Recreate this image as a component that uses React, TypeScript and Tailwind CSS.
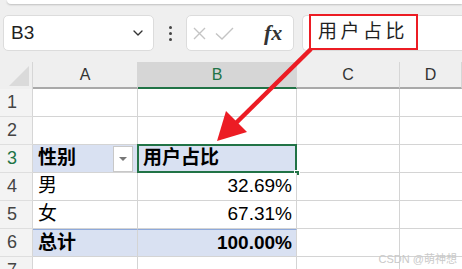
import React from "react";
import { ChevronDown } from "lucide-react";

const FONT = '"Liberation Sans", "Noto Sans CJK SC", sans-serif';

const cols = [
  { key: "A", w: "w-[105px]" },
  { key: "B", w: "w-[159px]" },
  { key: "C", w: "w-[103px]" },
  { key: "D", w: "flex-1" },
];

type Row = {
  n: number;
  a?: string;
  b?: string;
  kind?: "head" | "total";
};

const rows: Row[] = [
  { n: 1 },
  { n: 2 },
  { n: 3, a: "性别", b: "用户占比", kind: "head" },
  { n: 4, a: "男", b: "32.69%" },
  { n: 5, a: "女", b: "67.31%" },
  { n: 6, a: "总计", b: "100.00%", kind: "total" },
  { n: 7 },
];

function Toolbar() {
  return (
    <div className="flex items-center h-[36px] mt-[11px] pl-[3px]">
      {/* name box */}
      <div className="flex items-center justify-between w-[151px] h-full bg-white border border-[#dcdcdc] rounded-[5px] pl-[7px] pr-[7px]">
        <span className="text-[19px] text-[#1f1f1f]">B3</span>
        <ChevronDown className="w-[16px] h-[16px] text-[#333]" strokeWidth={2} />
      </div>

      {/* kebab */}
      <div className="flex flex-col items-center justify-center gap-[3px] w-[32px]">
        <span className="w-[3px] h-[3px] bg-[#444] rounded-full" />
        <span className="w-[3px] h-[3px] bg-[#444] rounded-full" />
        <span className="w-[3px] h-[3px] bg-[#444] rounded-full" />
      </div>

      {/* cancel / enter / fx */}
      <div className="flex items-center w-[108px] h-full bg-white border border-[#dcdcdc] rounded-[5px] pl-[6px] gap-[9px]">
        <svg width="13" height="13" viewBox="0 0 13 13" fill="none" stroke="#c4c4c4" strokeWidth="1.4">
          <path d="M1 1 L12 12 M12 1 L1 12" />
        </svg>
        <svg width="19" height="13" viewBox="0 0 19 13" fill="none" stroke="#c4c4c4" strokeWidth="1.4">
          <path d="M1 6.5 L7 12 L18 1" />
        </svg>
        <span
          className="ml-[21px] text-[22px] italic font-bold text-[#333] leading-none"
          style={{ fontFamily: '"Liberation Serif", serif' }}
        >
          fx
        </span>
      </div>

      {/* formula input */}
      <div className="flex-1 ml-[8px] h-full bg-white border border-[#dcdcdc] rounded-l-[5px] border-r-0 relative">
        <div className="absolute left-[6px] top-[-2px] w-[109px] h-[36px] border-[2.5px] border-[#ec1c24] flex items-center pl-[7px]">
          <span className="text-[19px] text-[#1f1f1f] tracking-[3.5px]">用户占比</span>
        </div>
      </div>
    </div>
  );
}

function Grid() {
  return (
    <div className="mt-[11px] bg-white">
      {/* column header */}
      <div className="flex h-[27px] bg-[#efefef]">
        <div className="w-[33px] border-r border-[#d6d6d6] relative">
          <div className="absolute right-[3px] bottom-[3px] w-0 h-0 border-l-[20px] border-l-transparent border-b-[20px] border-b-[#dadada]" />
        </div>
        {cols.map((c) => (
          <div
            key={c.key}
            className={`${c.w} flex items-center justify-center text-[16px] border-r border-[#d6d6d6] ${
              c.key === "B"
                ? "bg-[#d6d6d6] text-[#217346] border-b-2 border-b-[#217346]"
                : "text-[#333] border-b-2 border-b-[#a9a9a9]"
            }`}
          >
            {c.key}
          </div>
        ))}
      </div>

      {rows.map((r) => {
        const fill = r.kind ? "bg-[#d9e1f2]" : "bg-white";
        const top = r.kind === "total" ? "border-t border-t-[#8ea9db]" : "";
        const weight = r.kind ? "font-bold" : "font-normal";
        return (
          <div key={r.n} className="flex h-[28px]">
            <div
              className={`w-[33px] flex items-center pl-[7px] text-[18px] bg-[#f3f3f3] border-r border-[#d6d6d6] border-b border-b-[#dedede] ${
                r.n === 3 ? "text-[#217346]" : "text-[#444]"
              }`}
            >
              {r.n}
            </div>
            <div
              className={`w-[105px] flex items-center justify-between pl-[5px] text-[19px] text-black border-r border-b border-[#d4d4d4] ${fill} ${top} ${weight}`}
            >
              <span>{r.a}</span>
              {r.kind === "head" && (
                <div className="w-[20px] h-[26px] mr-[4px] bg-white border border-[#c8c8c8] flex items-center justify-center">
                  <div className="w-0 h-0 border-l-[4px] border-r-[4px] border-t-[4px] border-l-transparent border-r-transparent border-t-[#777]" />
                </div>
              )}
            </div>
            <div
              className={`w-[159px] flex items-center text-[19px] text-black border-r border-b border-[#d4d4d4] relative ${fill} ${top} ${weight} ${
                r.kind === "head" ? "justify-start pl-[5px]" : "justify-end pr-[4px]"
              }`}
            >
              {r.b}
              {r.kind === "head" && (
                <>
                  <div className="absolute left-[-1px] top-[-1px] right-[-1px] bottom-[-1px] border-2 border-[#217346]" />
                  <div className="absolute right-[-4px] bottom-[-4px] w-[6px] h-[6px] bg-[#217346] border border-white" />
                </>
              )}
            </div>
            <div className="w-[103px] border-r border-b border-[#d4d4d4]" />
            <div className="flex-1 border-b border-[#d4d4d4]" />
          </div>
        );
      })}
    </div>
  );
}

export default function App() {
  return (
    <div
      className="w-[462px] h-[269px] overflow-hidden bg-[#efefef] relative"
      style={{ fontFamily: FONT }}
    >
      <div className="ml-[7px] h-[4px] bg-white rounded-bl-[8px] shadow-[0_1px_2px_rgba(0,0,0,0.2)]" />
      <Toolbar />
      <Grid />

      {/* red annotation arrow */}
      <svg className="absolute left-0 top-0 pointer-events-none" width="462" height="269">
        <line x1="311" y1="49" x2="236" y2="123" stroke="#ec1c24" strokeWidth="4.5" />
        <polygon points="217,141 226,111 247,132" fill="#ec1c24" />
      </svg>

      <span className="absolute right-[5px] bottom-[2px] text-[11px] text-[#c9c9c9]">
        CSDN @萌神想
      </span>
    </div>
  );
}
